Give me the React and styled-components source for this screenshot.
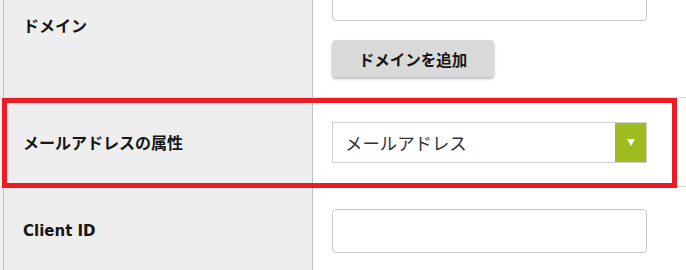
import React from 'react';
import styled, { createGlobalStyle } from 'styled-components';

const GlobalStyle = createGlobalStyle`
    html, body {
        margin: 0;
        padding: 0;
        background: #ffffff;
        overflow: hidden;
    }
    * {
        box-sizing: border-box;
    }
`;

const Page = styled.div`
    position: relative;
    height: 270px;
    overflow: hidden;
    padding-left: 3px;
    background-color: #efefef;
    font-family: "DejaVu Sans", "Noto Sans CJK JP", sans-serif;
`;

const Table = styled.div`
    margin-top: -43px;
    border-left: 1px solid #c4c4c4;
    background-color: #fff;
`;

const Row = styled.div`
    display: grid;
    grid-template-columns: 309px 1fr;
    border-bottom: 1px solid #d6dbde;
`;

const LabelCell = styled.div`
    display: flex;
    align-items: center;
    padding: 0 0 ${(p) => (p.$lift ? '4px' : '0')} 19px;
    background-color: #eeeeee;
    border-right: 1px solid #b3c1c9;
`;

const Label = styled.span`
    font-size: ${(p) => (p.$latin ? '15px' : '16px')};
    font-weight: bold;
    color: #151515;
`;

const FieldCell = styled.div`
    display: flex;
    flex-direction: column;
    align-items: flex-start;
    gap: 19px;
    padding: ${(p) => p.$pad};
`;

const TextInput = styled.input`
    width: 315px;
    height: 44px;
    border: 1px solid #c8c8c8;
    border-radius: 4px;
    background: #fff;
    font-size: 16px;
    outline: none;
`;

const AddButton = styled.button`
    width: 162px;
    height: 37px;
    border: none;
    border-radius: 4px;
    background-color: #d9d9d9;
    box-shadow: 0 2px 3px rgba(0, 0, 0, 0.28);
    font-family: "DejaVu Sans", "Noto Sans CJK JP", sans-serif;
    font-size: 15.5px;
    font-weight: bold;
    color: #151515;
    padding: 0;
`;

const Select = styled.div`
    display: flex;
    width: 315px;
    height: 41px;
    border: 1px solid #d2d2d2;
    background: #fff;
`;

const SelectValue = styled.span`
    flex: 1;
    display: flex;
    align-items: center;
    padding-left: 12px;
    font-family: "Noto Sans CJK JP", sans-serif;
    font-size: 17.4px;
    color: #333;
`;

const SelectArrow = styled.span`
    width: 31px;
    display: flex;
    align-items: center;
    justify-content: center;
    background-color: #9cbc1f;
`;

const Highlight = styled.div`
    position: absolute;
    left: 2px;
    top: 98px;
    width: 675px;
    height: 90px;
    border: 5px solid #ed1c24;
    pointer-events: none;
`;

const App = () => {
    return (
        <>
            <GlobalStyle />
            <Page>
                <Table>
                    <Row>
                        <LabelCell $lift>
                            <Label>ドメイン</Label>
                        </LabelCell>
                        <FieldCell $pad="20px 19px 20px">
                            <TextInput type="text" />
                            <AddButton type="button">ドメインを追加</AddButton>
                        </FieldCell>
                    </Row>
                    <Row>
                        <LabelCell>
                            <Label>メールアドレスの属性</Label>
                        </LabelCell>
                        <FieldCell $pad="24px 19px 23px">
                            <Select>
                                <SelectValue>メールアドレス</SelectValue>
                                <SelectArrow>
                                    <svg width="8" height="7" viewBox="0 0 8 7">
                                        <path d="M0 0 H8 L4 7 Z" fill="#fff" />
                                    </svg>
                                </SelectArrow>
                            </Select>
                        </FieldCell>
                    </Row>
                    <Row>
                        <LabelCell>
                            <Label $latin>Client ID</Label>
                        </LabelCell>
                        <FieldCell $pad="22px 19px 22px">
                            <TextInput type="text" />
                        </FieldCell>
                    </Row>
                </Table>
                <Highlight />
            </Page>
        </>
    );
};

export default App;
